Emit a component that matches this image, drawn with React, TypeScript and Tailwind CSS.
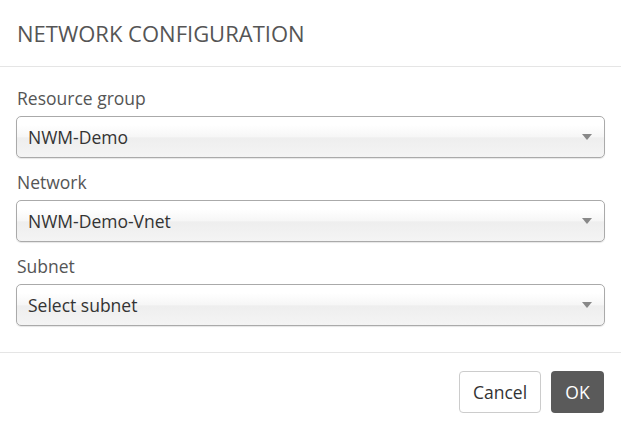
const fields = [
  { label: 'Resource group', value: 'NWM-Demo' },
  { label: 'Network', value: 'NWM-Demo-Vnet' },
  { label: 'Subnet', value: 'Select subnet' },
];

function SelectBox({ value }: { value: string }) {
  return (
    <div className="flex h-[42px] items-center justify-between rounded-[5px] border border-[#aaa] bg-[linear-gradient(#fff_20%,#f6f6f6_50%,#eee_52%,#f4f4f4_100%)] pl-[11px] pr-[12px] shadow-[0_1px_1px_rgba(0,0,0,0.1)]">
      <span className="text-[17.5px] text-[#333]">{value}</span>
      <span className="h-0 w-0 border-x-[5px] border-t-[6px] border-x-transparent border-t-[#888]" />
    </div>
  );
}

export default function App() {
  return (
    <div className="h-[429px] w-[621px] bg-white font-['Open_Sans',sans-serif]">
      {/* Header */}
      <div className="flex h-[67px] items-center border-b border-[#e5e5e5] px-[17px]">
        <h1 className="text-[22px] text-[#555]">NETWORK CONFIGURATION</h1>
      </div>

      {/* Body */}
      <div className="flex flex-col px-[16px] pt-[19px] pb-[26px]">
        {fields.map((f) => (
          <div key={f.label} className="mb-[12px] flex flex-col last:mb-0">
            <label className="mb-[6px] pl-px text-[17.5px] leading-[24px] text-[#555]">{f.label}</label>
            <SelectBox value={f.value} />
          </div>
        ))}
      </div>

      {/* Footer */}
      <div className="flex justify-end gap-[10px] border-t border-[#e5e5e5] px-[17px] pt-[18px]">
        <button className="h-[42px] w-[82px] rounded-[4px] border border-[#ccc] bg-white text-[17.5px] text-[#333]">
          Cancel
        </button>
        <button className="h-[42px] w-[53px] rounded-[4px] bg-[#5a5a5a] text-[17.5px] text-white">
          OK
        </button>
      </div>
    </div>
  );
}
